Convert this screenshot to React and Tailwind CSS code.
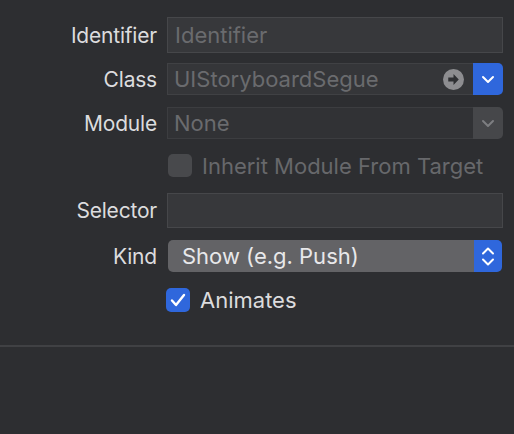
import React from 'react';

const font = { fontFamily: 'Inter, "Noto Sans", "Liberation Sans", sans-serif' };

function Label({ children }) {
  return (
    <div className="w-[157px] shrink-0 text-right text-[21px] tracking-[-0.2px] text-[#dcdcde] leading-none">{children}</div>
  );
}

function Chevron({ className }) {
  return (
    <svg width="14" height="9" viewBox="0 0 14 9" className={className} fill="none">
      <path d="M2 2l5 5 5-5" stroke="currentColor" strokeWidth="2" strokeLinecap="round" strokeLinejoin="round" />
    </svg>
  );
}

export default function App() {
  return (
    <div className="w-[514px] h-[434px] bg-[#2d2e31] flex flex-col" style={font}>
      <div className="h-[345px] flex flex-col pt-[17px]">
        <div className="flex items-center gap-[10px]">
          <Label>Identifier</Label>
          <div className="w-[336px] h-[36px] border border-[#46474a] bg-[#37383b] flex items-center px-[7px] text-[22px] text-[#6a6b6e]">
            Identifier
          </div>
        </div>

        <div className="flex items-center gap-[10px] mt-[10px]">
          <Label>Class</Label>
          <div className="w-[336px] h-[32px] flex">
            <div className="flex-1 bg-[#353639] border border-[#404144] border-r-0 flex items-center pl-[6px] pr-[9px] text-[22px] text-[#6a6b6e]">
              <span className="flex-1">UIStoryboardSegue</span>
              <svg width="21" height="21" viewBox="0 0 20 20">
                <circle cx="10" cy="10" r="10" fill="#8d8d90" />
                <path d="M5 8.2h5V4.8l5 5.2-5 5.2v-3.4H5z" fill="#2f3033" />
              </svg>
            </div>
            <div className="w-[30px] bg-[#2f67dc] rounded-r-[5px] flex items-center justify-center text-white">
              <Chevron />
            </div>
          </div>
        </div>

        <div className="flex items-center gap-[10px] mt-[12px]">
          <Label>Module</Label>
          <div className="w-[336px] h-[32px] flex">
            <div className="flex-1 bg-[#313235] border border-[#3c3d40] border-r-0 flex items-center px-[6px] text-[22px] text-[#6a6b6e]">
              None
            </div>
            <div className="w-[30px] bg-[#46474a] rounded-r-[5px] flex items-center justify-center text-[#7d7e81]">
              <Chevron />
            </div>
          </div>
        </div>

        <div className="flex items-center gap-[10px] mt-[15px]">
          <div className="w-[157px] shrink-0" />
          <div className="flex items-center ml-[1px]">
            <div className="w-[24px] h-[23px] rounded-[5px] bg-[#48494c]" />
            <span className="ml-[10px] text-[22px] text-[#67686b] leading-none">Inherit Module From Target</span>
          </div>
        </div>

        <div className="flex items-center gap-[10px] mt-[16px]">
          <Label>Selector</Label>
          <div className="w-[336px] h-[35px] border border-[#46474a] bg-[#37383b]" />
        </div>

        <div className="flex items-center gap-[10px] mt-[12px]">
          <Label>Kind</Label>
          <div className="w-[334px] h-[32px] flex ml-[1px] rounded-[5px] overflow-hidden">
            <div className="flex-1 bg-[#636366] flex items-center pl-[14px] text-[22px] text-[#e8e8ea]">
              Show (e.g. Push)
            </div>
            <div className="w-[28px] bg-[#2f67dc] flex flex-col items-center justify-center gap-[3px] text-white">
              <svg width="14" height="8" viewBox="0 0 14 8" fill="none">
                <path d="M2 6.5l5-5 5 5" stroke="currentColor" strokeWidth="2" strokeLinecap="round" strokeLinejoin="round" />
              </svg>
              <svg width="14" height="8" viewBox="0 0 14 8" fill="none">
                <path d="M2 1.5l5 5 5-5" stroke="currentColor" strokeWidth="2" strokeLinecap="round" strokeLinejoin="round" />
              </svg>
            </div>
          </div>
        </div>

        <div className="flex items-center mt-[16px] pl-[166px]">
          <div className="w-[24px] h-[24px] rounded-[5px] bg-[#2f67dc] flex items-center justify-center">
            <svg width="16" height="14" viewBox="0 0 16 14" fill="none">
              <path d="M2 7.5l4 4.5 8-10" stroke="white" strokeWidth="2.4" strokeLinecap="round" strokeLinejoin="round" />
            </svg>
          </div>
          <span className="ml-[10px] text-[22px] text-[#dcdcde] leading-none">Animates</span>
        </div>
      </div>
      <div className="h-[2px] bg-[#404144]" />
      <div className="flex-1 bg-[#2d2e31]" />
    </div>
  );
}
